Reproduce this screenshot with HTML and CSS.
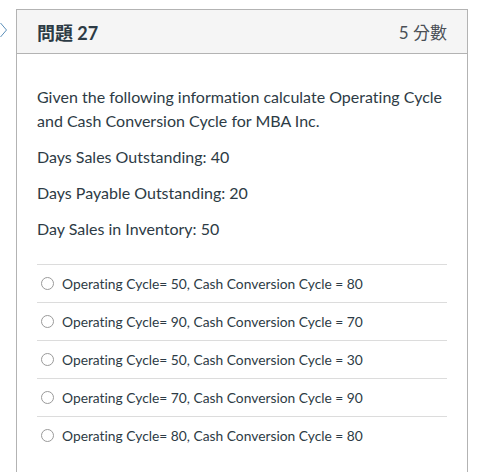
FILE: index.html
```html
<!DOCTYPE html>
<html lang="zh-Hant">
<head>
<meta charset="utf-8">
<title>問題 27</title>
<link rel="stylesheet" href="styles.css">
</head>
<body>
<div class="page">
  <svg class="nav-arrow" width="8" height="16" viewBox="0 0 8 16" aria-hidden="true">
    <path d="M0.5 1 L6.5 8 L0.5 15" fill="none" stroke="#5b8fb9" stroke-width="1"/>
  </svg>
  <section class="card">
    <header class="card-header">
      <h2 class="q-title">問題 27</h2>
      <span class="q-points">5 分數</span>
    </header>
    <div class="card-body">
      <p class="q-text">Given the following information calculate Operating Cycle and Cash Conversion Cycle for MBA Inc.</p>
      <p class="q-text">Days Sales Outstanding: 40</p>
      <p class="q-text">Days Payable Outstanding: 20</p>
      <p class="q-text">Day Sales in Inventory: 50</p>
      <ul class="answers">
        <li class="answer"><span class="radio"></span><span>Operating Cycle= 50, Cash Conversion Cycle = 80</span></li>
        <li class="answer"><span class="radio"></span><span>Operating Cycle= 90, Cash Conversion Cycle = 70</span></li>
        <li class="answer"><span class="radio"></span><span>Operating Cycle= 50, Cash Conversion Cycle = 30</span></li>
        <li class="answer"><span class="radio"></span><span>Operating Cycle= 70, Cash Conversion Cycle = 90</span></li>
        <li class="answer"><span class="radio"></span><span>Operating Cycle= 80, Cash Conversion Cycle = 80</span></li>
      </ul>
    </div>
  </section>
</div>
</body>
</html>
```

FILE: styles.css
```css
html, body {
  margin: 0;
  padding: 0;
  background: #ffffff;
}
body {
  font-family: Lato, "Noto Sans CJK TC", sans-serif;
  color: #2d3b45;
  overflow: hidden;
  font-variant-ligatures: none;
}
.page {
  position: relative;
  padding: 9px 22px 0 16px;
}
.nav-arrow {
  position: absolute;
  left: 0;
  top: 22px;
}
.card {
  width: 450px;
  border: 1px solid #b3b3b3;
  border-bottom: none;
  min-height: 480px;
}
.card-header {
  display: flex;
  align-items: center;
  justify-content: space-between;
  height: 43px;
  padding: 0 20px;
  background: #f5f5f5;
  border-bottom: 1px solid #b3b3b3;
}
.q-title {
  margin: 0;
  font-size: 18px;
  font-weight: 700;
  color: #2d3b45;
}
.q-points {
  font-size: 17px;
  color: #4a4f55;
}
.card-body {
  padding: 31px 20px 0 20px;
}
.q-text {
  margin: 0 0 12px 0;
  font-size: 16px;
  line-height: 24px;
}
.answers {
  list-style: none;
  margin: 23px 0 0 0;
  padding: 0;
}
.answer {
  display: flex;
  align-items: center;
  height: 37px;
  border-top: 1px solid #dcdcdc;
  font-size: 13.8px;
  padding-left: 4px;
}
.radio {
  width: 11px;
  height: 11px;
  border: 1px solid #9a9a9a;
  border-radius: 50%;
  margin-right: 8px;
  flex: none;
}
```
